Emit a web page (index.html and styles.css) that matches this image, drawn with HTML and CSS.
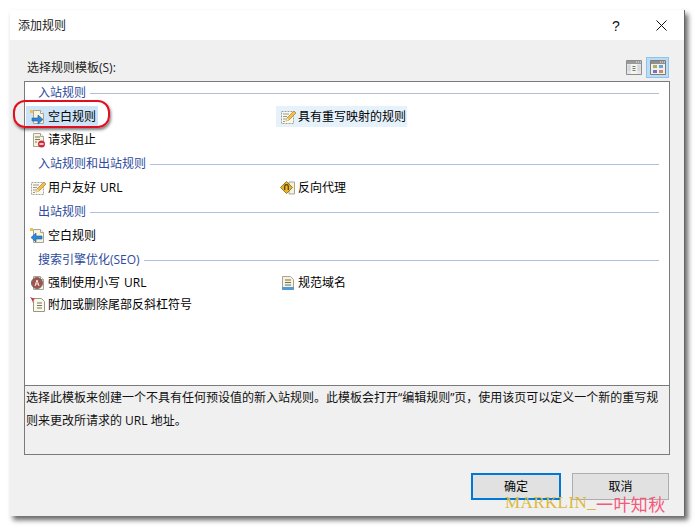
FILE: index.html
```html
<!DOCTYPE html>
<html lang="zh-CN">
<head>
<meta charset="utf-8">
<title>添加规则</title>
<link rel="stylesheet" href="styles.css">
</head>
<body>
<svg class="defs" width="0" height="0" aria-hidden="true">
  <defs>
    <symbol id="page" viewBox="0 0 16 16">
      <path d="M3.500 1.500h7l3 3v10h-10z" fill="#f8f3dc" stroke="#a9a594"/>
      <path d="M10.500 1.500v3h3" fill="#fff" stroke="#a9a594"/>
    </symbol>
    <symbol id="edit" viewBox="0 0 16 16">
      <path d="M1.500 2.500h12v12h-12z" fill="#faf8ee" stroke="#a3a193" stroke-dasharray="2 1"/>
      <path d="M3 5h6M3 7.500h4M3 10h3M3 12.500h2" stroke="#9a9a8e"/>
      <path d="M6 12l1-3 7-7 2 2-7 7z" fill="#f2c04c" stroke="#a87c3a" stroke-width=".7"/>
      <path d="M6 12l1-3 2 2z" fill="#ffeccb"/>
    </symbol>
  </defs>
</svg>
<main class="dialog">
  <header class="titlebar">
    <span class="title">添加规则</span>
    <span class="help">?</span>
    <svg class="close" width="11" height="11" viewBox="0 0 11 11"><path d="M.5.500l10 10M10.500.500l-10 10" stroke="#111" stroke-width="1" fill="none"/></svg>
  </header>
  <div class="content">
    <div class="toolbar">
      <span class="label">选择规则模板(S):</span>
      <span class="viewbtn">
        <svg width="16" height="15" viewBox="0 0 16 15"><path d="M.5.500h15v14H.5z" fill="#f4f4f0" stroke="#8d8d8d"/><path d="M1 1h14v3H1z" fill="#9a9a9a"/><path d="M10 2h1M12 2h1M14 2h1" stroke="#eee"/><path d="M1 4h4v10H1zM11 4h4v10h-4z" fill="#e4e8ea"/><path d="M1.500 6h3M1.500 8h3M1.500 10h3M11.500 6h3M11.500 8h3M11.500 10h3" stroke="#c4c8ca"/><path d="M6.500 6.500h3M6.500 8.500h3M6.500 10.500h3" stroke="#77776a"/></svg>
      </span>
      <span class="viewbtn active">
        <svg width="16" height="15" viewBox="0 0 16 15"><path d="M.5.500h15v14H.5z" fill="#eef0f0" stroke="#7d7d7d"/><path d="M1 1h14v3H1z" fill="#8f8f8f"/><path d="M10 2h1M12 2h1M14 2h1" stroke="#eee"/><path d="M3 5h4v3H3z" fill="#a9b25f"/><path d="M9 5h4v3H9z" fill="#6ba5cf"/><path d="M3 10h4v3H3z" fill="#7d6fb8"/><path d="M9 10h4v3H9z" fill="#cd8a62"/></svg>
      </span>
    </div>
    <div class="panel">
      <div class="list">
        <div class="group-head"><span>入站规则</span><i></i></div>
        <div class="rows">
          <div class="item selected">
            <svg class="ico" width="16" height="16" viewBox="0 0 16 16"><use href="#page"/><path d="M0 1h3v3H0z" fill="#f0c24a"/><path d="M2 9h6V6l5 4.500L8 15v-3H2z" fill="#2f86d4" stroke="#1c5f9f" stroke-width=".6"/></svg>
            <span>空白规则</span>
          </div>
          <div class="item hovered">
            <svg class="ico" width="16" height="16" viewBox="0 0 16 16"><use href="#edit"/></svg>
            <span>具有重写映射的规则</span>
          </div>
          <div class="item">
            <svg class="ico" width="16" height="16" viewBox="0 0 16 16"><use href="#page"/><path d="M5 5h5M5 7.500h5M5 10h2" stroke="#77756a"/><circle cx="11.500" cy="12" r="3.500" fill="#cf2b3c"/><path d="M9.500 12h4" stroke="#fff" stroke-width="1.500"/></svg>
            <span>请求阻止</span>
          </div>
        </div>
        <div class="group-head"><span>入站规则和出站规则</span><i></i></div>
        <div class="rows">
          <div class="item">
            <svg class="ico" width="16" height="16" viewBox="0 0 16 16"><use href="#edit"/></svg>
            <span>用户友好 URL</span>
          </div>
          <div class="item">
            <svg class="ico" width="16" height="16" viewBox="0 0 16 16"><path d="M9 2h5.500v12H9z" fill="#f6f1da" stroke="#a9a594"/><path d="M6.500 1.500L12.500 7.500 6.500 13.500 .5 7.500z" fill="#e9b425" stroke="#8f7a3a"/><path d="M4.700 10V6.500a1.800 1.800 0 0 1 3.600 0V10" fill="none" stroke="#4f3d14" stroke-width="1.200"/></svg>
            <span>反向代理</span>
          </div>
        </div>
        <div class="group-head"><span>出站规则</span><i></i></div>
        <div class="rows">
          <div class="item">
            <svg class="ico" width="16" height="16" viewBox="0 0 16 16"><use href="#page"/><path d="M0 0h3v3H0z" fill="#f0c24a"/><path d="M12 8H6V5L1 9.500 6 14v-3h6z" fill="#2f86d4" stroke="#1c5f9f" stroke-width=".6"/></svg>
            <span>空白规则</span>
          </div>
        </div>
        <div class="group-head"><span>搜索引擎优化(SEO)</span><i></i></div>
        <div class="rows tight">
          <div class="item">
            <svg class="ico" width="16" height="16" viewBox="0 0 16 16"><use href="#page"/><circle cx="7" cy="8" r="5.500" fill="#a5524e" stroke="#6d6a66"/><path d="M5 11l2-6 2 6M5.800 9h2.400" fill="none" stroke="#f4e9e0"/></svg>
            <span>强制使用小写 URL</span>
          </div>
          <div class="item">
            <svg class="ico" width="16" height="16" viewBox="0 0 16 16"><path d="M2.500 1.500h8l3 3v10h-11z" fill="#f8f3dc" stroke="#a9a594"/><path d="M5 5h6M5 7.500h6M5 10h6" stroke="#6f6d60"/><path d="M2 12h12v3H2z" fill="#4f9bd6"/></svg>
            <span>规范域名</span>
          </div>
          <div class="item">
            <svg class="ico" width="16" height="16" viewBox="0 0 16 16"><path d="M3.500 1.500h8l3 3v10h-11z" fill="#fbf8e8" stroke="#9a9788"/><path d="M7 6h5M7 8.500h5M7 11h5" stroke="#77756a"/><path d="M0 0l5 2-2 1v3L2 3z" fill="#d7263d"/></svg>
            <span>附加或删除尾部反斜杠符号</span>
          </div>
        </div>
      </div>
      <p class="desc">选择此模板来创建一个不具有任何预设值的新入站规则。此模板会打开“编辑规则”页，使用该页可以定义一个新的重写规则来更改所请求的 URL 地址。</p>
    </div>
    <footer class="actions">
      <button class="btn primary" type="button">确定</button>
      <button class="btn" type="button">取消</button>
    </footer>
  </div>
</main>
<div class="callout"></div>
<div class="watermark"><span class="wm-latin">MARKLIN_</span><span class="wm-cjk">一叶知秋</span></div>
</body>
</html>
```
FILE: styles.css
```css
* { box-sizing: border-box; }
html, body { margin: 0; height: 100%; }
body {
  width: 697px;
  height: 527px;
  background: #fff;
  overflow: hidden;
  position: relative;
  padding: 10px 0 0 10px;
  font: 12px/16px "Open Sans", "Noto Sans CJK SC", "Liberation Sans", sans-serif;
  color: #000;
}
.defs { position: absolute; }
.dialog {
  width: 675px;
  height: 506px;
  background: #f0f0f0;
  display: flex;
  flex-direction: column;
  border-right: 1px solid #666;
  box-shadow: 3px 4px 5px rgba(0, 0, 0, .6);
}
.titlebar {
  height: 30px;
  flex: none;
  background: #fff;
  display: flex;
  align-items: center;
  padding: 1px 17px 0 8px;
}
.title { flex: 1; color: #222; }
.help { width: 44px; font: 14px "Liberation Sans", sans-serif; color: #111; }
.close { display: block; }
.content {
  flex: 1;
  display: flex;
  flex-direction: column;
  padding: 0 14px;
}
.toolbar {
  height: 41px;
  display: flex;
  align-items: flex-end;
  gap: 1px;
  padding: 0 1px 3px 3px;
}
.label { flex: 1; padding-bottom: 2px; color: #222; }
.viewbtn {
  width: 22px;
  height: 21px;
  display: flex;
  align-items: center;
  justify-content: center;
}
.viewbtn.active { width: 23px; background: #bcdcf4; border: 1px solid #8cc4f0; }
.panel {
  width: 646px;
  height: 374px;
  border: 1px solid #7a7a7a;
  background: #fff;
  display: flex;
  flex-direction: column;
}
.list { flex: 1; padding: 1px 10px 0 5px; }
.group-head {
  height: 20px;
  display: flex;
  align-items: center;
  gap: 4px;
  padding-left: 8px;
  color: #2d4a9e;
}
.group-head i {
  flex: 1;
  height: 1px;
  background: #adc0df;
}
.rows {
  display: grid;
  grid-template-columns: 250px 1fr;
  grid-auto-rows: 23px;
  margin: 2px 0 3px;
}
.rows.tight { grid-auto-rows: 22px; }
.item { display: flex; align-items: center; gap: 2px; height: 21px; align-self: center; }
.item span { white-space: nowrap; word-spacing: 1px; }
.ico { flex: none; }
.item.selected { background: #cde4f8; width: 72px; margin-left: -4px; padding-left: 4px; }
.item.hovered { background: #e5f2fc; width: 131px; margin-left: -4px; padding-left: 4px; }
.desc {
  flex: none;
  margin: 0;
  height: 69px;
  border-top: 1px solid #7a7a7a;
  background: #f0f0f0;
  padding: 0 1px;
  line-height: 23px;
  color: #111;
}
.actions {
  flex: 1;
  display: flex;
  justify-content: flex-end;
  gap: 11px;
  padding: 18px 1px 0 0;
}
.btn {
  width: 90px;
  height: 27px;
  background: #e1e1e1;
  border: 1px solid #adadad;
  font: inherit;
  color: #000;
  padding: 0;
}
.btn + .btn { width: 97px; }
.btn.primary { border: 2px solid #0078d7; }
.callout {
  position: absolute;
  left: 13px;
  top: 100px;
  width: 97px;
  height: 28px;
  border: 2px solid #e01020;
  border-radius: 12px;
  box-shadow: 1px 2px 3px rgba(0, 0, 0, .5);
}
.watermark {
  position: absolute;
  left: 505px;
  top: 490px;
  display: flex;
  align-items: center;
  height: 26px;
  white-space: nowrap;
}
.wm-latin { font: 17px "Liberation Serif", serif; color: #dcb93c; letter-spacing: .4px; }
.wm-cjk { font: 17px "Noto Sans CJK SC", sans-serif; color: #f4587a; letter-spacing: .4px; }
```
